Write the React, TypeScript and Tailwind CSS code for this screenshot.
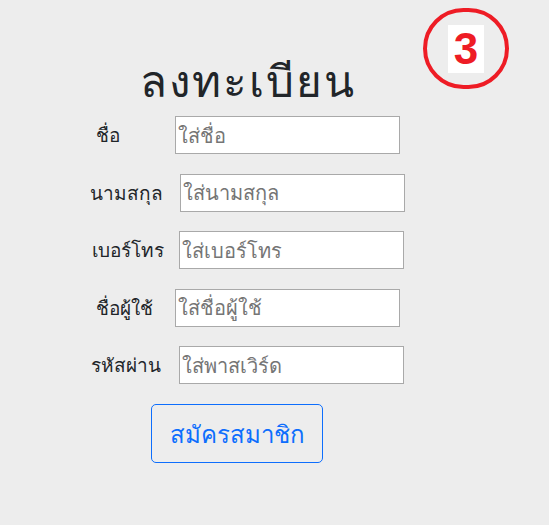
import React from "react";

const rows = [
  { label: "ชื่อ", ph: "ใส่ชื่อ", gap: "w-[55px]" },
  { label: "นามสกุล", ph: "ใส่นามสกุล", gap: "w-[17px]" },
  { label: "เบอร์โทร", ph: "ใส่เบอร์โทร", gap: "w-[15px]" },
  { label: "ชื่อผู้ใช้", ph: "ใส่ชื่อผู้ใช้", gap: "w-[22px]" },
  { label: "รหัสผ่าน", ph: "ใส่พาสเวิร์ด", gap: "w-[18px]" },
];

export default function App() {
  return (
    <div
      className="relative w-[549px] h-[525px] bg-[#ededed] text-[#212529]"
      style={{ fontFamily: '"Noto Sans", "Liberation Sans", sans-serif' }}
    >
      <div className="absolute left-[423px] top-[8px] w-[86px] h-[81px] rounded-full border-[4px] border-[#ee1c25] flex items-center justify-center">
        <span className="bg-white px-[6px] py-[2px] text-[44px] leading-[44px] font-bold text-[#ee1c25] font-['Liberation_Sans',sans-serif]">
          3
        </span>
      </div>
      <div className="w-[495px] flex flex-col items-center pt-[52px]">
        <h1 className="text-[44px] leading-[56px] font-medium tracking-[2px]">ลงทะเบียน</h1>
        <div className="flex flex-col items-center gap-[19.5px] mt-[8px]">
          {rows.map((r) => (
            <div key={r.label} className="flex items-center">
              <span className="text-[19px] leading-[24px] font-medium">{r.label}</span>
              <span className={r.gap} />
              <input
                placeholder={r.ph}
                className="w-[225px] h-[38px] bg-white border border-[#a9a9a9] px-[2px] text-[20px] placeholder:text-[#757575] outline-none"
              />
            </div>
          ))}
        </div>
      </div>
      <div className="w-[474px] flex justify-center mt-[20px]">
        <button className="w-[172px] h-[59px] rounded-[5px] border border-[#0d6efd] text-[#0d6efd] text-[24px] bg-transparent">
          สมัครสมาชิก
        </button>
      </div>
    </div>
  );
}
